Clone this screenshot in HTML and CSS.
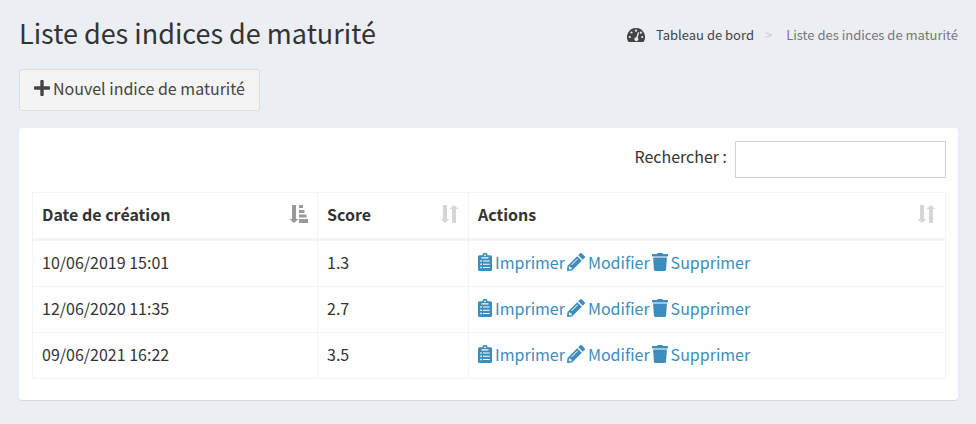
FILE: index.html
```html
<!DOCTYPE html>
<html lang="fr">
<head>
<meta charset="utf-8">
<meta name="viewport" content="width=device-width, initial-scale=1">
<title>Liste des indices de maturité</title>
<link rel="stylesheet" href="styles.css">
</head>
<body>
<svg class="sprite" aria-hidden="true">
  <symbol id="i-plus" viewBox="0 0 16 16"><path d="M6.3 1q0-1 1-1h1.4q1 0 1 1v5.3H15q1 0 1 1v1.4q0 1-1 1H9.700V15q0 1-1 1H7.300q-1 0-1-1V9.700H1q-1 0-1-1V7.300q0-1 1-1h5.300z"/></symbol>
  <symbol id="i-gauge" viewBox="0 0 18 14"><path fill-rule="evenodd" d="M9 0a9 9 0 0 1 7.800 13.500q-.3.500-.9.500H2.100q-.6 0-.9-.5A9 9 0 0 1 9 0zM9 1.600a1.100 1.100 0 1 0 0 2.200 1.100 1.100 0 0 0 0-2.200zM4.500 3.400a1.100 1.100 0 1 0 0 2.200 1.100 1.100 0 0 0 0-2.200zM2.800 7.900a1.100 1.100 0 1 0 0 2.200 1.100 1.100 0 0 0 0-2.200zM15.200 7.900a1.100 1.100 0 1 0 0 2.200 1.100 1.100 0 0 0 0-2.200zM13.900 3.600a1.100 1.100 0 1 0 0 2.200 1.100 1.100 0 0 0 0-2.200zM10.800 4.400 9.300 9.200a2 2 0 1 0 1.400.5L12 4.900q0-.8-.6-.9-.5 0-.6.4z"/></symbol>
  <symbol id="i-clip" viewBox="0 0 14 18"><path fill-rule="evenodd" d="M1.500 2.200h3a2.500 2.500 0 0 1 5 0h3q1.500 0 1.500 1.500v12.800q0 1.500-1.500 1.500h-11Q0 18 0 16.500V3.700q0-1.500 1.500-1.500zM7 1.400a.9.900 0 1 0 0 1.800.9.900 0 0 0 0-1.800zM3.500 4.200v1.300h7V4.200zM2.300 7.300v1.500h1.500V7.300zM5 7.500v1.100h6.700V7.500zM2.300 10.500V12h1.500v-1.500zM5 10.700v1.100h6.700v-1.100zM2.300 13.700v1.500h1.500v-1.500zM5 13.900V15h6.700v-1.100z"/></symbol>
  <symbol id="i-pencil" viewBox="0 0 18 18"><path fill-rule="evenodd" d="m10.200 3.200 4.600 4.600L5 17.500l-4.100.5q-1 0-.9-1L.5 12.900zM11.200 2.200 12.900.5q1-1 2.100 0l2.500 2.500q1 1 0 2.100l-1.700 1.700zM10.100 5.700l-5.700 5.700q-.3.700.6.600l5.700-5.700q.2-.7-.6-.6zM2.200 13.400l-.5 2.200.9.800 2.100-.4v-1.500H3.300v-1.300z"/></symbol>
  <symbol id="i-trash" viewBox="0 0 16 18"><path d="M.6 1.100h4.100l.5-.7Q5.500 0 6 0h4q.5 0 .8.400l.5.700h4.100q.6 0 .6.600v1.100q0 .6-.6.600H.600Q0 3.400 0 2.800V1.700q0-.6.600-.6zM1.100 4.500h13.800l-.8 11.900q-.1 1.600-1.700 1.600H3.600q-1.600 0-1.700-1.600z"/></symbol>
  <symbol id="i-sort" viewBox="0 0 19 18"><path d="M3 0h4v14h2.500l-4.500 4-4.500-4H3zM12 18h4V4h2.500L14 0 9.500 4H12z"/></symbol>
  <symbol id="i-sorted" viewBox="0 0 19 18"><path d="M3 0h4v14h2.500l-4.500 4-4.500-4H3zM10 0h4v3h-4zM10 5h5.500v3H10zM10 9.500h7.500v3H10zM10 14h9v4h-9z"/></symbol>
</svg>
<header class="page-head">
  <h1>Liste des indices de maturité</h1>
  <nav class="crumbs" aria-label="Fil d’Ariane">
    <a href="#"><svg class="gauge" aria-hidden="true"><use href="#i-gauge"/></svg>Tableau de bord</a>
    <span class="sep" aria-hidden="true">&gt;</span>
    <span>Liste des indices de maturité</span>
  </nav>
</header>
<main>
  <button class="btn" type="button"><svg class="plus" aria-hidden="true"><use href="#i-plus"/></svg>Nouvel indice de maturité</button>
  <section class="box">
    <div class="search">
      <label for="search">Rechercher :</label>
      <input id="search" type="search">
    </div>
    <table>
      <colgroup><col class="c-date"><col class="c-score"><col></colgroup>
      <thead>
        <tr>
          <th scope="col" aria-sort="ascending"><div class="head">Date de création<svg class="sort active" aria-hidden="true"><use href="#i-sorted"/></svg></div></th>
          <th scope="col"><div class="head">Score<svg class="sort" aria-hidden="true"><use href="#i-sort"/></svg></div></th>
          <th scope="col"><div class="head">Actions<svg class="sort" aria-hidden="true"><use href="#i-sort"/></svg></div></th>
        </tr>
      </thead>
      <tbody>
        <tr>
          <td>10/06/2019 15:01</td><td>1.3</td>
          <td><div class="actions"><a href="#"><svg class="clip" aria-hidden="true"><use href="#i-clip"/></svg>Imprimer</a><a href="#"><svg class="pencil" aria-hidden="true"><use href="#i-pencil"/></svg>Modifier</a><a href="#"><svg class="trash" aria-hidden="true"><use href="#i-trash"/></svg>Supprimer</a></div></td>
        </tr>
        <tr>
          <td>12/06/2020 11:35</td><td>2.7</td>
          <td><div class="actions"><a href="#"><svg class="clip" aria-hidden="true"><use href="#i-clip"/></svg>Imprimer</a><a href="#"><svg class="pencil" aria-hidden="true"><use href="#i-pencil"/></svg>Modifier</a><a href="#"><svg class="trash" aria-hidden="true"><use href="#i-trash"/></svg>Supprimer</a></div></td>
        </tr>
        <tr>
          <td>09/06/2021 16:22</td><td>3.5</td>
          <td><div class="actions"><a href="#"><svg class="clip" aria-hidden="true"><use href="#i-clip"/></svg>Imprimer</a><a href="#"><svg class="pencil" aria-hidden="true"><use href="#i-pencil"/></svg>Modifier</a><a href="#"><svg class="trash" aria-hidden="true"><use href="#i-trash"/></svg>Supprimer</a></div></td>
        </tr>
      </tbody>
    </table>
  </section>
</main>
</body>
</html>
```
FILE: styles.css
```css
* { box-sizing: border-box; }
body {
  margin: 0;
  padding: 15px 18px 24px 19px;
  background: #ebeff4;
  color: #333;
  font-family: "Source Sans Pro", "Noto Sans CJK SC", "Open Sans", sans-serif;
  font-size: 16px;
  line-height: 26px;
}
.sprite { display: none; }
svg { flex: none; fill: currentColor; }
a { color: #3c8dbc; text-decoration: none; }
.page-head {
  display: flex;
  align-items: center;
  justify-content: space-between;
  margin-bottom: 18px;
}
h1 { margin: 0; font-size: 27px; font-weight: 400; line-height: 36px; }
.crumbs {
  display: flex;
  align-items: center;
  padding-top: 4px;
  color: #777;
  font-size: 13px;
  line-height: 20px;
}
.crumbs a { display: flex; align-items: center; gap: 11px; color: #444; }
.crumbs .sep { margin: 0 14px 0 11px; color: #ccc; }
.gauge { width: 18px; height: 14px; }
.btn {
  display: inline-flex;
  align-items: center;
  gap: 3px;
  padding: 5px 14px 9px;
  border: 1px solid #ddd;
  border-radius: 3px;
  background: #f4f4f4;
  color: #444;
  font: inherit;
}
.plus { width: 16px; height: 16px; }
.box {
  margin-top: 17px;
  padding: 13px 12px 21px 13px;
  border-radius: 3px;
  background: #fff;
  box-shadow: 0 1px 1px rgba(0, 0, 0, .1);
}
.search {
  display: flex;
  align-items: center;
  justify-content: flex-end;
  gap: 8px;
  margin-bottom: 14px;
}
.search label { padding-bottom: 8px; }
.search input {
  width: 211px;
  height: 37px;
  padding: 4px 10px;
  border: 1px solid #d2d2de;
  border-radius: 0;
  background: #fff;
  font: inherit;
  appearance: none;
}
table {
  width: 100%;
  table-layout: fixed;
  border: 1px solid #f4f4f4;
  border-width: 1px 0 0 1px;
  border-spacing: 0;
}
.c-date { width: 285px; }
.c-score { width: 151px; }
th, td {
  padding: 8px 9px 11px;
  border: 1px solid #f4f4f4;
  border-width: 0 1px 1px 0;
  text-align: left;
}
th { border-bottom-width: 3px; font-weight: 700; }
.head, .actions { display: flex; align-items: center; }
.head { justify-content: space-between; }
.sort { width: 19px; height: 18px; color: #d6d6d6; }
.sort.active { color: #999; }
.actions { gap: 2px; }
.actions a { display: flex; align-items: center; gap: 3px; }
.clip { width: 14px; height: 18px; }
.pencil { width: 18px; height: 18px; }
.trash { width: 16px; height: 18px; }
```
